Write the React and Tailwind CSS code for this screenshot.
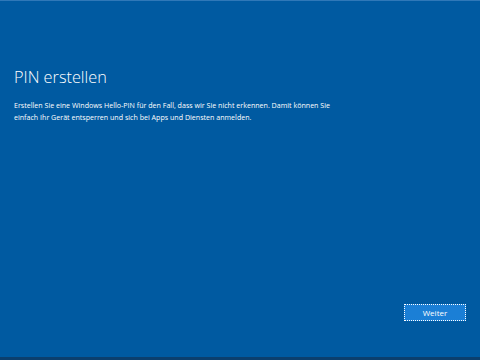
export default function App() {
  return (
    <div
      className="w-[480px] h-[360px] bg-[#005aa1] flex flex-col border-t border-t-[#2f78b8] border-b-[3px] border-b-[#0b3f6e] text-white overflow-hidden"
      style={{ fontFamily: '"Open Sans", "Noto Sans", sans-serif' }}
    >
      <div className="flex-1 flex flex-col px-[14px] pt-[64px]">
        <h1 className="text-[16.3px] font-light leading-[24px]">PIN erstellen</h1>
        <p className="mt-[10px] w-[322px] text-[7.1px] leading-[12px]">
          Erstellen Sie eine Windows Hello-PIN für den Fall, dass wir Sie nicht erkennen. Damit können Sie
          einfach Ihr Gerät entsperren und sich bei Apps und Diensten anmelden.
        </p>
      </div>
      <div className="flex justify-end px-[14px] pb-[36px]">
        <button className="w-[62px] h-[17px] bg-[#1b7fd6] border border-dotted border-white text-[8px] leading-none text-white">
          Weiter
        </button>
      </div>
    </div>
  );
}
